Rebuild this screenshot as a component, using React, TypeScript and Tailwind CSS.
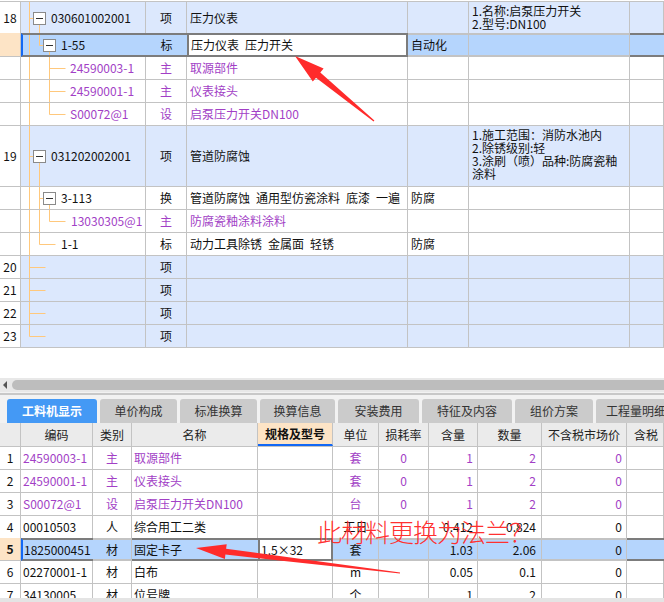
import React from 'react';

const LINE = '#ffc87c';
const PURPLE = 'text-[#a23fc6]';
const GRID = 'border-[#c3c3c3]';
const SP = '\u2002';

type Seg = [number, number, number, number];

// tree guide drawing for the code column; y=-1 is the row centre, y=-2 the row bottom
const Tree: React.FC<{ h: number; segs: Seg[]; boxes?: number[]; dx?: number }> = ({ h, segs, boxes = [], dx = 0 }) => {
    const c = Math.round(h / 2) + 0.5;
    const y = (v: number) => (v === -1 ? c : v === -2 ? h : v);
    return (
        <svg className="absolute left-0 top-0 pointer-events-none" width={125} height={h}>
            {segs.map(([x1, y1, x2, y2], i) => (
                <line key={i} x1={x1 + dx + 0.5} y1={y(y1)} x2={x2 + dx + 0.5} y2={y(y2)} stroke={LINE} strokeWidth={1} />
            ))}
            {boxes.map((bx, i) => (
                <g key={i}>
                    <rect x={bx + dx + 0.5} y={c - 6} width={12} height={12} fill="#fff" stroke="#8a8a8a" />
                    <line x1={bx + dx + 3} y1={c} x2={bx + dx + 10} y2={c} stroke="#333" />
                </g>
            ))}
        </svg>
    );
};

const Cell: React.FC<{ className?: string; children?: React.ReactNode }> = ({ className = '', children }) => (
    <div className={`border-r ${GRID} flex items-center overflow-hidden whitespace-nowrap ${className}`}>{children}</div>
);

const topCols = 'grid grid-cols-[21px_125px_41px_221px_61px_161px_1fr]';

const PlainRow: React.FC<{
    num?: string; h: string; hpx: number; blue?: boolean; segs: Seg[]; boxes?: number[]; pl: string;
    code?: string; kind: string; name?: string; unit?: string; feat?: string[]; purple?: boolean; top?: boolean;
}> = ({ num, h, hpx, blue, segs, boxes, pl, code, kind, name, unit, feat, purple, top }) => {
    const bg = blue ? 'bg-[#dce8fd]' : 'bg-white';
    const tc = purple ? PURPLE : 'text-[#111]';
    return (
        <div className={`${topCols} ${h} border-b ${top ? 'border-t' : ''} ${GRID}`}>
            <Cell className="justify-center bg-white">{num}</Cell>
            <Cell className={`${bg} relative ${pl} ${tc}`}>
                <Tree h={hpx} segs={segs} boxes={boxes} />
                <span className="relative">{code}</span>
            </Cell>
            <Cell className={`${bg} justify-center ${tc}`}>{kind}</Cell>
            <Cell className={`${bg} pl-[3px] ${tc}`}>{name}</Cell>
            <Cell className={`${bg} pl-[3px]`}>{unit}</Cell>
            <Cell className={`${bg} pl-[3px] !items-start pt-[2px]`}>
                {feat && (
                    <div className="leading-[13px] whitespace-normal">
                        {feat.map((f) => (
                            <div key={f}>{f}</div>
                        ))}
                    </div>
                )}
            </Cell>
            <Cell className={bg} />
        </div>
    );
};

const tabs = [
    { t: '工料机显示', w: 'w-[90px]' },
    { t: '单价构成', w: 'w-[77px]' },
    { t: '标准换算', w: 'w-[77px]' },
    { t: '换算信息', w: 'w-[75px]' },
    { t: '安装费用', w: 'w-[81px]' },
    { t: '特征及内容', w: 'w-[90px]' },
    { t: '组价方案', w: 'w-[78px]' },
    { t: '工程量明细', w: 'w-[80px]' },
];

const botCols = 'grid grid-cols-[21px_72px_39px_126px_75px_46px_50px_49px_64px_85px_1fr]';

type BotRow = {
    n: string; code: string; kind: string; name: string; spec?: string; unit: string;
    loss?: string; qty: string; amt: string; price: string; purple?: boolean; sel?: boolean;
};

const botRows: BotRow[] = [
    { n: '1', code: '24590003-1', kind: '主', name: '取源部件', unit: '套', loss: '0', qty: '1', amt: '2', price: '0', purple: true },
    { n: '2', code: '24590001-1', kind: '主', name: '仪表接头', unit: '套', loss: '0', qty: '1', amt: '2', price: '0', purple: true },
    { n: '3', code: 'S00072@1', kind: '设', name: '启泵压力开关DN100', unit: '台', loss: '0', qty: '1', amt: '2', price: '0', purple: true },
    { n: '4', code: '00010503', kind: '人', name: '综合用工二类', unit: '工日', qty: '0.412', amt: '0.824', price: '0' },
    { n: '5', code: '1825000451', kind: '材', name: '固定卡子', spec: '1.5×32', unit: '套', qty: '1.03', amt: '2.06', price: '0', sel: true },
    { n: '6', code: '02270001-1', kind: '材', name: '白布', unit: 'm', qty: '0.05', amt: '0.1', price: '0' },
    { n: '7', code: '34130005', kind: '材', name: '位号牌', unit: '个', qty: '1', amt: '2', price: '0' },
];

function arrow(tx: number, ty: number, hx: number, hy: number, headLen: number, headHalf: number, tailW: number, baseW: number) {
    const dx = hx - tx;
    const dy = hy - ty;
    const len = Math.hypot(dx, dy);
    const ux = dx / len;
    const uy = dy / len;
    const nx = -uy;
    const ny = ux;
    const bx = hx - ux * headLen;
    const by = hy - uy * headLen;
    const p = (x: number, y: number) => `${x.toFixed(1)},${y.toFixed(1)}`;
    return [
        p(tx + nx * tailW, ty + ny * tailW),
        p(bx + nx * baseW, by + ny * baseW),
        p(bx + nx * headHalf, by + ny * headHalf),
        p(hx, hy),
        p(bx - nx * headHalf, by - ny * headHalf),
        p(bx - nx * baseW, by - ny * baseW),
        p(tx - nx * tailW, ty - ny * tailW),
    ].join(' ');
}

export default function App() {
    return (
        <div className="relative w-[664px] h-[602px] overflow-hidden bg-white flex flex-col text-[12px] text-[#111] font-['Noto_Sans_CJK_SC','Noto_Sans',sans-serif] leading-none">
            {/* upper grid */}
            <div className="h-px shrink-0" />
            <PlainRow top num="18" h="h-[33px]" hpx={31} blue segs={[[8, 0, 8, 60], [8, -1, 12, -1], [18, 22, 18, 40]]} boxes={[12]} pl="pl-[30px]"
                code="030601002001" kind="项" name="压力仪表" feat={['1.名称:启泵压力开关', '2.型号:DN100']} />
            {/* selected row */}
            <div className={`${topCols} h-[24px] -mt-px`}>
                <Cell className={`bg-[#fde4c6] border-b ${GRID}`} />
                <div className="bg-[#b5d5fd] relative border-y-2 border-[#7c7c7c] border-l-2 border-l-[#1268f5] flex items-center pl-[38px] overflow-hidden">
                    <Tree h={20} dx={-2} segs={[[8, 0, 8, 20], [18, 0, 18, -1], [18, -1, 22, -1], [28, 16, 28, 20]]} boxes={[22]} />
                    <span className="relative">1-55</span>
                </div>
                <div className="bg-[#b5d5fd] border-y-2 border-[#7c7c7c] flex items-center justify-center">标</div>
                <div className="bg-white border-2 border-[#7c7c7c] flex items-center pl-[2px] whitespace-nowrap">{`压力仪表${SP}压力开关`}</div>
                <div className={`bg-[#b5d5fd] border-y-2 border-[#7c7c7c] border-r ${GRID} flex items-center pl-[3px]`}>自动化</div>
                <div className={`bg-[#b5d5fd] border-y-2 border-[#7c7c7c] border-r ${GRID}`} />
                <div className="bg-[#b5d5fd] border-y-2 border-[#7c7c7c]" />
            </div>
            <PlainRow h="h-[23px]" hpx={22} segs={[[8, 0, 8, 22], [28, 0, 28, 22], [28, -1, 44, -1]]} pl="pl-[49px]"
                code="24590003-1" kind="主" name="取源部件" purple />
            <PlainRow h="h-[23px]" hpx={22} segs={[[8, 0, 8, 22], [28, 0, 28, 22], [28, -1, 44, -1]]} pl="pl-[49px]"
                code="24590001-1" kind="主" name="仪表接头" purple />
            <PlainRow h="h-[23px]" hpx={22} segs={[[8, 0, 8, 22], [28, 0, 28, -1], [28, -1, 44, -1]]} pl="pl-[49px]"
                code="S00072@1" kind="设" name="启泵压力开关DN100" purple />
            <PlainRow num="19" h="h-[61px]" hpx={60} blue segs={[[8, 0, 8, 60], [8, -1, 12, -1], [18, 36, 18, 60]]} boxes={[12]} pl="pl-[30px]"
                code="031202002001" kind="项" name="管道防腐蚀" feat={['1.施工范围：消防水池内', '2.除锈级别:轻', '3.涂刷（喷）品种:防腐瓷釉', '涂料']} />
            <PlainRow h="h-[23px]" hpx={22} segs={[[8, 0, 8, 22], [18, 0, 18, 22], [18, -1, 22, -1], [28, 17, 28, 22]]} boxes={[22]} pl="pl-[40px]"
                code="3-113" kind="换" name={`管道防腐蚀${SP}通用型仿瓷涂料${SP}底漆${SP}一遍`} unit="防腐" />
            <PlainRow h="h-[23px]" hpx={22} segs={[[8, 0, 8, 22], [18, 0, 18, 22], [28, 0, 28, -1], [28, -1, 44, -1]]} pl="pl-[50px]"
                code="13030305@1" kind="主" name="防腐瓷釉涂料涂料" purple />
            <PlainRow h="h-[23px]" hpx={22} segs={[[8, 0, 8, 22], [18, 0, 18, -1], [18, -1, 34, -1]]} pl="pl-[40px]"
                code="1-1" kind="标" name={`动力工具除锈${SP}金属面${SP}轻锈`} unit="防腐" />
            {['20', '21', '22', '23'].map((n) => (
                <PlainRow key={n} num={n} h="h-[23px]" hpx={22} blue
                    segs={n === '23' ? [[8, 0, 8, -1], [8, -1, 24, -1]] : [[8, 0, 8, 22], [8, -1, 24, -1]]}
                    pl="pl-[40px]" kind="项" />
            ))}
            <div className="h-[30px] shrink-0" />

            {/* horizontal scrollbar */}
            <div className="h-[14px] shrink-0 bg-[#e8e8e8] flex items-center pl-[3px] gap-[5px]">
                <span className="w-0 h-0 border-y-[4px] border-y-transparent border-r-[4px] border-r-[#555]" />
                <div className="flex-1 h-[10px] rounded-l-full bg-[#bdbdbd]" />
            </div>
            <div className="h-px shrink-0 bg-[#f2f2f2]" />
            <div className="h-[2px] shrink-0 bg-[#c8c8c8]" />

            {/* tabs */}
            <div className="h-[28px] shrink-0 bg-[#f2f2f2] flex items-end gap-[3px] pl-[7px] pt-[4px]">
                {tabs.map((tab, i) => (
                    <div key={tab.t}
                        className={`${tab.w} shrink-0 h-[24px] rounded-t-[3px] flex items-center justify-center text-[12px] ${
                            i === 0 ? 'bg-[#4499f5] text-white font-bold' : 'bg-[#cbcbcb] text-[#333]'
                        }`}>
                        {tab.t}
                    </div>
                ))}
            </div>

            {/* lower grid */}
            <div className={`${botCols} h-[24px] shrink-0 bg-[#ebebeb] border-b ${GRID} text-[#222]`}>
                <Cell />
                <Cell className="justify-center">编码</Cell>
                <Cell className="justify-center">类别</Cell>
                <Cell className="justify-center">名称</Cell>
                <Cell className="justify-center bg-[#fde4c6] font-bold border-b-2 border-b-[#1268f5] text-[#111]">规格及型号</Cell>
                <Cell className="justify-center">单位</Cell>
                <Cell className="justify-center">损耗率</Cell>
                <Cell className="justify-center">含量</Cell>
                <Cell className="justify-center">数量</Cell>
                <Cell className="justify-center">不含税市场价</Cell>
                <Cell className="pl-[7px]">含税</Cell>
            </div>
            <div className="flex-1 overflow-hidden">
                {botRows.map((r) => {
                    const tc = r.purple ? PURPLE : 'text-[#111]';
                    if (r.sel) {
                        const s = 'bg-[#b5d5fd] border-y-2 border-[#7c7c7c]';
                        return (
                            <div key={r.n} className={`${botCols} h-[23px] -mt-px`}>
                                <Cell className={`bg-[#fde4c6] justify-center font-bold border-b ${GRID}`}>{r.n}</Cell>
                                <div className={`${s} border-l-2 border-l-[#1268f5] flex items-center pl-px`}>{r.code}</div>
                                <div className={`${s} border-r ${GRID} flex items-center justify-center`}>{r.kind}</div>
                                <div className={`${s} flex items-center pl-[2px]`}>{r.name}</div>
                                <div className="bg-white border-2 border-[#7c7c7c] flex items-center pl-px">{r.spec}</div>
                                <div className={`${s} border-r ${GRID} flex items-center justify-center`}>{r.unit}</div>
                                <div className={`${s} border-r ${GRID}`} />
                                <div className={`${s} border-r ${GRID} flex items-center justify-end pr-[4px]`}>{r.qty}</div>
                                <div className={`${s} border-r ${GRID} flex items-center justify-end pr-[5px]`}>{r.amt}</div>
                                <div className={`${s} border-r ${GRID} flex items-center justify-end pr-[4px]`}>{r.price}</div>
                                <div className={s} />
                            </div>
                        );
                    }
                    return (
                        <div key={r.n} className={`${botCols} h-[23px] border-b ${GRID}`}>
                            <Cell className="justify-center">{r.n}</Cell>
                            <Cell className={`pl-[2px] ${tc}`}>{r.code}</Cell>
                            <Cell className={`justify-center ${tc}`}>{r.kind}</Cell>
                            <Cell className={`pl-[2px] ${tc}`}>{r.name}</Cell>
                            <Cell>{r.spec}</Cell>
                            <Cell className={`justify-center ${tc}`}>{r.unit}</Cell>
                            <Cell className={`justify-center ${tc}`}>{r.loss}</Cell>
                            <Cell className={`justify-end pr-[4px] ${tc}`}>{r.qty}</Cell>
                            <Cell className={`justify-end pr-[5px] ${tc}`}>{r.amt}</Cell>
                            <Cell className={`justify-end pr-[4px] ${tc}`}>{r.price}</Cell>
                            <Cell />
                        </div>
                    );
                })}
            </div>
            <div className="h-[4px] shrink-0 bg-[#e4e4e4]" />

            {/* annotations drawn over the screenshot */}
            <svg className="absolute inset-0 pointer-events-none" width={664} height={602}>
                <polygon points={arrow(374, 121, 295, 56, 30, 8.5, 0.6, 3.4)} fill="#ff2b2b" />
                <polygon points={arrow(400, 573, 196, 548, 30, 7.5, 0.5, 3)} fill="#ff2b2b" />
            </svg>
            <div className="absolute left-[317px] top-[515px] text-[25px] leading-[32px] text-[#ff3030] font-['Noto_Sans_CJK_SC',sans-serif] font-light tracking-[-1px] whitespace-nowrap pointer-events-none">
                此材料更换为法兰？
            </div>
        </div>
    );
}
